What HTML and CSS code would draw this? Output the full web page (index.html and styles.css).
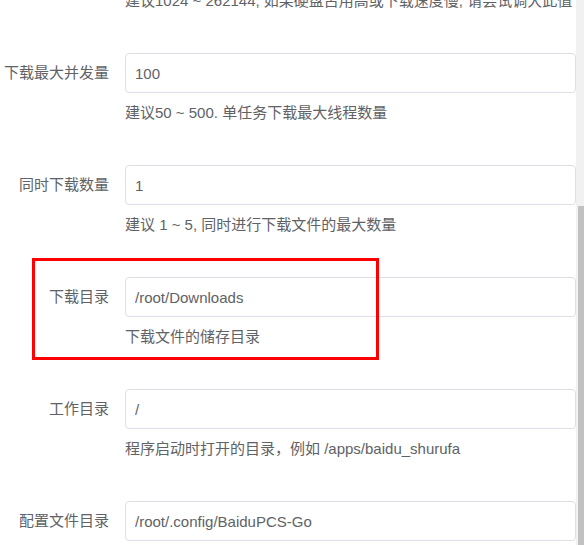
FILE: index.html
```html
<!DOCTYPE html>
<html lang="zh-CN">
<head>
    <meta charset="UTF-8">
    <title>设置</title>
    <link rel="stylesheet" href="styles.css">
</head>
<body>
    <div class="page">
        <div class="form">
            <div class="item item-top">
                <div class="label"></div>
                <div class="help">建议1024 ~ 262144, 如果硬盘占用高或下载速度慢, 请尝试调大此值</div>
            </div>

            <div class="item">
                <label class="label">下载最大并发量</label>
                <input class="input" type="text" value="100">
                <div class="help">建议50 ~ 500. 单任务下载最大线程数量</div>
            </div>

            <div class="item">
                <label class="label">同时下载数量</label>
                <input class="input" type="text" value="1">
                <div class="help">建议 1 ~ 5, 同时进行下载文件的最大数量</div>
            </div>

            <div class="item">
                <div class="mark"></div>
                <label class="label">下载目录</label>
                <input class="input" type="text" value="/root/Downloads">
                <div class="help">下载文件的储存目录</div>
            </div>

            <div class="item">
                <label class="label">工作目录</label>
                <input class="input" type="text" value="/">
                <div class="help">程序启动时打开的目录，例如 /apps/baidu_shurufa</div>
            </div>

            <div class="item">
                <label class="label">配置文件目录</label>
                <input class="input" type="text" value="/root/.config/BaiduPCS-Go">
            </div>
        </div>

        <div class="scrollbar">
            <div class="thumb"></div>
        </div>
    </div>
</body>
</html>
```

FILE: styles.css
```css
html,
body {
    margin: 0;
    height: 100%;
    overflow: hidden;
    background-color: #fff;
}

body {
    font-family: "Liberation Sans", "Noto Sans CJK SC", sans-serif;
    font-size: 15px;
    color: #606266;
}

.page {
    display: flex;
    height: 100%;
}

.form {
    flex: 1;
}

.item {
    position: relative;
    display: grid;
    grid-template-columns: 125px 1fr;
    margin-bottom: 42px;
}

.item-top {
    margin-top: -9px;
}

.label {
    grid-column: 1;
    padding-right: 16px;
    text-align: right;
    line-height: 40px;
    white-space: nowrap;
}

.input {
    grid-column: 2;
    box-sizing: border-box;
    width: 100%;
    height: 40px;
    padding: 0 9px;
    border: 1px solid #dcdfe6;
    border-radius: 4px;
    font-family: inherit;
    font-size: 15px;
    color: #606266;
    outline: none;
}

.help {
    grid-column: 2;
    margin-top: 10px;
    line-height: 20px;
    white-space: nowrap;
}

.item-top .help {
    margin-top: 0;
}

.mark {
    position: absolute;
    left: 32px;
    top: -19px;
    width: 341px;
    height: 96px;
    border: 3px solid #ff0000;
}

.scrollbar {
    width: 8px;
    background-color: #f1f1f1;
}

.thumb {
    margin-top: 206px;
    margin-left: 2px;
    height: 400px;
    background-color: #c1c1c1;
}
```
